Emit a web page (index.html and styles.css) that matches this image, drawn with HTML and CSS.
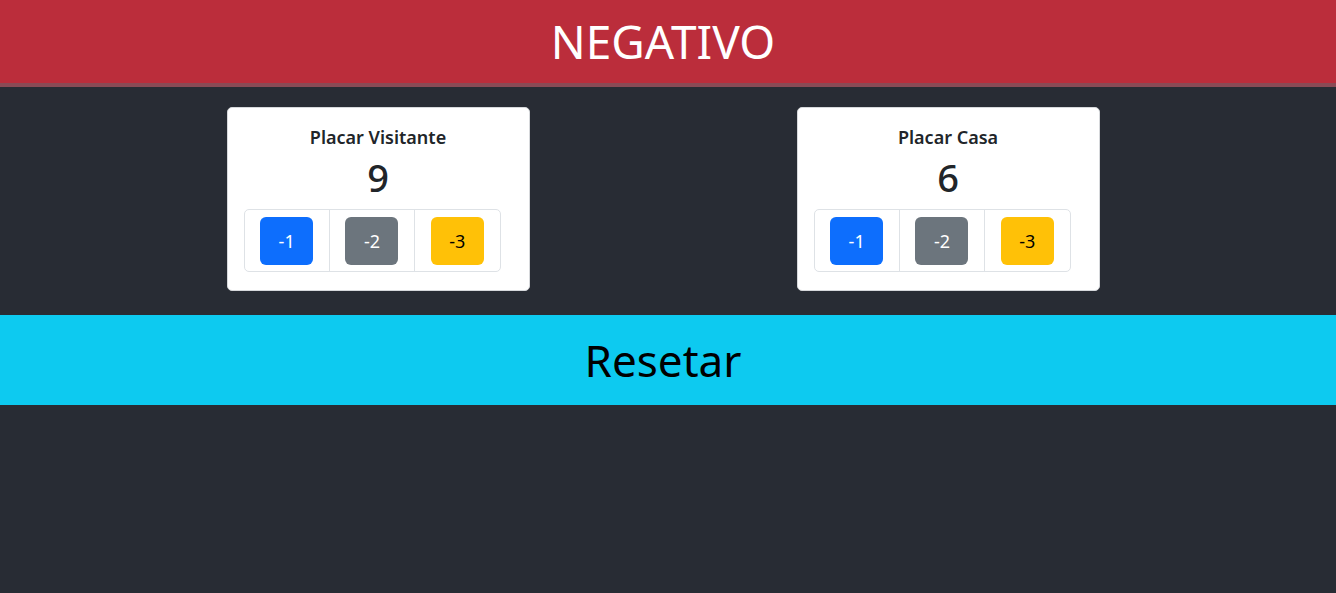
FILE: index.html
```html
<!DOCTYPE html>
<html lang="pt">
<head>
<meta charset="utf-8">
<title>Placar</title>
<link rel="stylesheet" href="styles.css">
</head>
<body>
<header class="topbar">NEGATIVO</header>
<main class="container">
  <div class="col">
    <div class="card">
      <h2 class="card-title">Placar Visitante</h2>
      <div class="score">9</div>
      <div class="btn-group">
        <div class="cell"><button class="btn blue">-1</button></div>
        <div class="cell"><button class="btn gray">-2</button></div>
        <div class="cell"><button class="btn yellow">-3</button></div>
      </div>
    </div>
  </div>
  <div class="col">
    <div class="card">
      <h2 class="card-title">Placar Casa</h2>
      <div class="score">6</div>
      <div class="btn-group">
        <div class="cell"><button class="btn blue">-1</button></div>
        <div class="cell"><button class="btn gray">-2</button></div>
        <div class="cell"><button class="btn yellow">-3</button></div>
      </div>
    </div>
  </div>
</main>
<div class="reset">Resetar</div>
</body>
</html>
```
FILE: styles.css
```css
* { box-sizing: border-box; }
html, body {
  margin: 0;
  background: #282c34;
  font-family: "Noto Sans", "Open Sans", sans-serif;
  color: #212529;
}
.topbar {
  height: 87px;
  background: #bb2d3b;
  border-bottom: 4px solid #8a4a55;
  color: #fff;
  font-size: 46px;
  line-height: 83px;
  text-align: center;
  padding-right: 10px;
}
.container {
  width: 1140px;
  margin-left: calc(50% - 575px);
  display: flex;
  padding: 20px 0 24px;
}
.col {
  width: 570px;
  display: flex;
  justify-content: center;
}
.card {
  width: 303px;
  background: #fff;
  border: 1px solid #d6d8db;
  border-radius: 5px;
  padding: 15px 16px 18px;
  text-align: center;
}
.card-title {
  margin: 0;
  font-size: 18px;
  font-weight: 600;
  line-height: 28px;
}
.score {
  font-size: 38px;
  font-weight: 500;
  line-height: 44px;
  margin: 4px 0 10px;
}
.btn-group {
  display: flex;
  width: 257px;
  border: 1px solid #dee2e6;
  border-radius: 5px;
}
.cell {
  flex: 1;
  padding: 7px 0 6px;
  display: flex;
  justify-content: center;
}
.cell + .cell { border-left: 1px solid #dee2e6; }
.btn {
  width: 53px;
  height: 48px;
  border: 0;
  border-radius: 6px;
  font-family: inherit;
  font-size: 18px;
  color: #fff;
  padding: 0;
}
.blue { background: #0d6efd; }
.gray { background: #6c757d; }
.yellow { background: #ffc107; color: #000; }
.reset {
  height: 90px;
  background: #0dcaf0;
  color: #000;
  font-size: 44px;
  line-height: 90px;
  text-align: center;
  padding-right: 10px;
}
```
